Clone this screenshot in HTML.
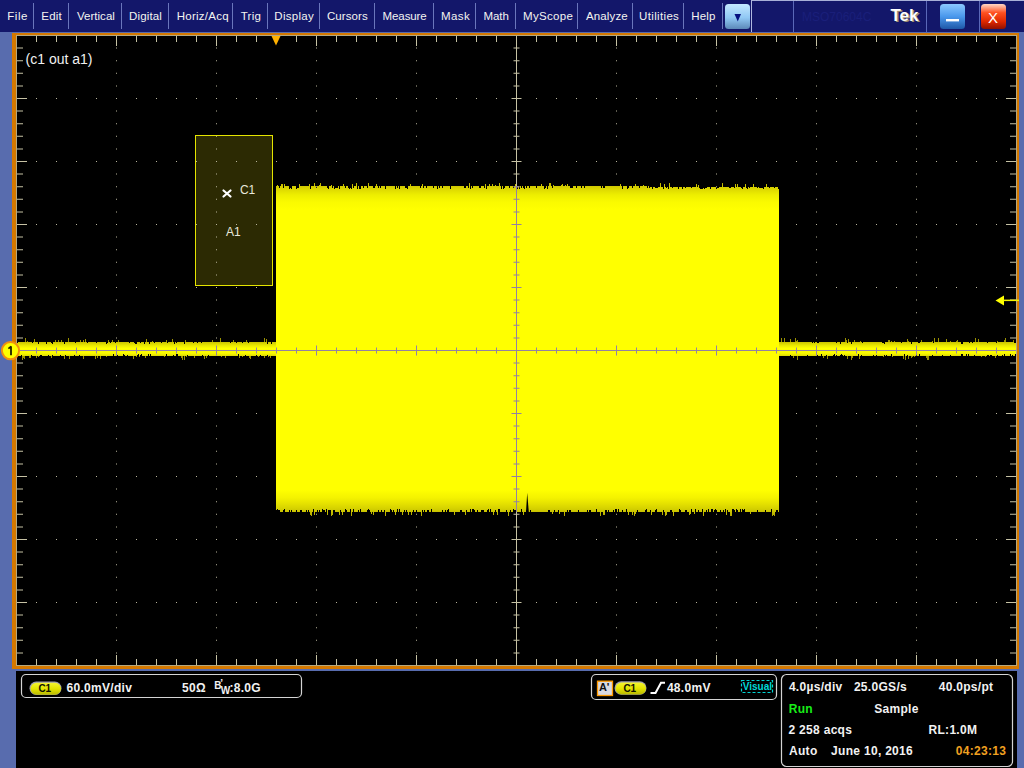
<!DOCTYPE html>
<html><head><meta charset="utf-8"><style>
html,body{margin:0;padding:0}
body{width:1024px;height:768px;overflow:hidden;position:relative;background:#586cae;font-family:"Liberation Sans",sans-serif}
.t{position:absolute;white-space:nowrap;font-family:"Liberation Sans",sans-serif}
svg{position:absolute;left:0;top:0}
</style></head><body>
<svg width="1024" height="768" viewBox="0 0 1024 768" shape-rendering="auto"><defs><linearGradient id="gdrop" x1="0" y1="0" x2="0" y2="1"><stop offset="0" stop-color="#c4e8ff"/><stop offset="0.55" stop-color="#90c8f4"/><stop offset="1" stop-color="#5c88b8"/></linearGradient><linearGradient id="gmin" x1="0" y1="0" x2="0" y2="1"><stop offset="0" stop-color="#8cc8ff"/><stop offset="0.5" stop-color="#4a98ec"/><stop offset="1" stop-color="#1e58a8"/></linearGradient><linearGradient id="gclose" x1="0" y1="0" x2="0" y2="1"><stop offset="0" stop-color="#ffd8c8"/><stop offset="0.35" stop-color="#ff5020"/><stop offset="0.7" stop-color="#e02800"/><stop offset="1" stop-color="#901000"/></linearGradient><linearGradient id="gbase" x1="0" y1="0" x2="0" y2="1"><stop offset="0" stop-color="#ccc400"/><stop offset="0.25" stop-color="#eaea00"/><stop offset="0.45" stop-color="#ffff00"/><stop offset="0.8" stop-color="#fafa00"/><stop offset="1" stop-color="#dcd800"/></linearGradient><linearGradient id="gblk" gradientUnits="userSpaceOnUse" x1="0" y1="183" x2="0" y2="516"><stop offset="0" stop-color="#b8b000"/><stop offset="0.009" stop-color="#d0c800"/><stop offset="0.021" stop-color="#e0dc00"/><stop offset="0.036" stop-color="#eeee00"/><stop offset="0.057" stop-color="#fafa00"/><stop offset="0.081" stop-color="#ffff00"/><stop offset="0.922" stop-color="#ffff00"/><stop offset="0.946" stop-color="#f4f200"/><stop offset="0.964" stop-color="#e4e000"/><stop offset="0.979" stop-color="#d4d000"/><stop offset="0.988" stop-color="#c8c000"/><stop offset="1" stop-color="#b0a800"/></linearGradient><linearGradient id="gpill" x1="0" y1="0" x2="0" y2="1"><stop offset="0" stop-color="#f4f430"/><stop offset="0.5" stop-color="#e4e400"/><stop offset="1" stop-color="#b8b800"/></linearGradient></defs><rect x="0" y="0" width="1024" height="32" fill="#13176a"/><rect x="33" y="3" width="1" height="26" fill="#6a76bc"/><rect x="68" y="3" width="1" height="26" fill="#6a76bc"/><rect x="121" y="3" width="1" height="26" fill="#6a76bc"/><rect x="168" y="3" width="1" height="26" fill="#6a76bc"/><rect x="232" y="3" width="1" height="26" fill="#6a76bc"/><rect x="267" y="3" width="1" height="26" fill="#6a76bc"/><rect x="319" y="3" width="1" height="26" fill="#6a76bc"/><rect x="374" y="3" width="1" height="26" fill="#6a76bc"/><rect x="433" y="3" width="1" height="26" fill="#6a76bc"/><rect x="475" y="3" width="1" height="26" fill="#6a76bc"/><rect x="515" y="3" width="1" height="26" fill="#6a76bc"/><rect x="577" y="3" width="1" height="26" fill="#6a76bc"/><rect x="632" y="3" width="1" height="26" fill="#6a76bc"/><rect x="683" y="3" width="1" height="26" fill="#6a76bc"/><rect x="722" y="3" width="1" height="26" fill="#6a76bc"/><rect x="725" y="4" width="25" height="25" rx="3.5" fill="url(#gdrop)"/><path d="M734.5 14 L741 14 L737.75 21.5 Z" fill="#061080"/><rect x="751" y="0" width="273" height="1" fill="#a8b0d8"/><rect x="751" y="0" width="1" height="32" fill="#b0b8e0"/><rect x="793" y="1" width="1" height="31" fill="#5a68b8"/><rect x="926" y="1" width="1" height="31" fill="#5a68b8"/><rect x="979" y="1" width="1" height="31" fill="#5a68b8"/><rect x="940" y="4" width="25" height="25" rx="3.5" fill="url(#gmin)"/><rect x="946" y="19" width="13" height="2.4" fill="#ffffff"/><rect x="981" y="4" width="25" height="25" rx="3.5" fill="url(#gclose)"/><rect x="12" y="33" width="1007" height="636" fill="#d47800"/><rect x="16" y="35" width="1001" height="631" fill="#000"/><rect x="16.5" y="35.5" width="1000" height="630" fill="none" stroke="#b4a880" stroke-width="1"/><rect x="195" y="135" width="78" height="151" fill="#2c2a03"/><path d="M116.0 47.6h1v1h-1zM116.0 60.2h1v1h-1zM116.0 72.8h1v1h-1zM116.0 85.4h1v1h-1zM116.0 98.0h1v1h-1zM116.0 110.6h1v1h-1zM116.0 123.2h1v1h-1zM116.0 135.8h1v1h-1zM116.0 148.4h1v1h-1zM116.0 161.0h1v1h-1zM116.0 173.6h1v1h-1zM116.0 186.2h1v1h-1zM116.0 198.8h1v1h-1zM116.0 211.4h1v1h-1zM116.0 224.0h1v1h-1zM116.0 236.6h1v1h-1zM116.0 249.2h1v1h-1zM116.0 261.8h1v1h-1zM116.0 274.4h1v1h-1zM116.0 287.0h1v1h-1zM116.0 299.6h1v1h-1zM116.0 312.2h1v1h-1zM116.0 324.8h1v1h-1zM116.0 337.4h1v1h-1zM116.0 350.0h1v1h-1zM116.0 362.6h1v1h-1zM116.0 375.2h1v1h-1zM116.0 387.8h1v1h-1zM116.0 400.4h1v1h-1zM116.0 413.0h1v1h-1zM116.0 425.6h1v1h-1zM116.0 438.2h1v1h-1zM116.0 450.8h1v1h-1zM116.0 463.4h1v1h-1zM116.0 476.0h1v1h-1zM116.0 488.6h1v1h-1zM116.0 501.2h1v1h-1zM116.0 513.8h1v1h-1zM116.0 526.4h1v1h-1zM116.0 539.0h1v1h-1zM116.0 551.6h1v1h-1zM116.0 564.2h1v1h-1zM116.0 576.8h1v1h-1zM116.0 589.4h1v1h-1zM116.0 602.0h1v1h-1zM116.0 614.6h1v1h-1zM116.0 627.2h1v1h-1zM116.0 639.8h1v1h-1zM116.0 652.4h1v1h-1zM216.0 47.6h1v1h-1zM216.0 60.2h1v1h-1zM216.0 72.8h1v1h-1zM216.0 85.4h1v1h-1zM216.0 98.0h1v1h-1zM216.0 110.6h1v1h-1zM216.0 123.2h1v1h-1zM216.0 135.8h1v1h-1zM216.0 148.4h1v1h-1zM216.0 161.0h1v1h-1zM216.0 173.6h1v1h-1zM216.0 186.2h1v1h-1zM216.0 198.8h1v1h-1zM216.0 211.4h1v1h-1zM216.0 224.0h1v1h-1zM216.0 236.6h1v1h-1zM216.0 249.2h1v1h-1zM216.0 261.8h1v1h-1zM216.0 274.4h1v1h-1zM216.0 287.0h1v1h-1zM216.0 299.6h1v1h-1zM216.0 312.2h1v1h-1zM216.0 324.8h1v1h-1zM216.0 337.4h1v1h-1zM216.0 350.0h1v1h-1zM216.0 362.6h1v1h-1zM216.0 375.2h1v1h-1zM216.0 387.8h1v1h-1zM216.0 400.4h1v1h-1zM216.0 413.0h1v1h-1zM216.0 425.6h1v1h-1zM216.0 438.2h1v1h-1zM216.0 450.8h1v1h-1zM216.0 463.4h1v1h-1zM216.0 476.0h1v1h-1zM216.0 488.6h1v1h-1zM216.0 501.2h1v1h-1zM216.0 513.8h1v1h-1zM216.0 526.4h1v1h-1zM216.0 539.0h1v1h-1zM216.0 551.6h1v1h-1zM216.0 564.2h1v1h-1zM216.0 576.8h1v1h-1zM216.0 589.4h1v1h-1zM216.0 602.0h1v1h-1zM216.0 614.6h1v1h-1zM216.0 627.2h1v1h-1zM216.0 639.8h1v1h-1zM216.0 652.4h1v1h-1zM316.0 47.6h1v1h-1zM316.0 60.2h1v1h-1zM316.0 72.8h1v1h-1zM316.0 85.4h1v1h-1zM316.0 98.0h1v1h-1zM316.0 110.6h1v1h-1zM316.0 123.2h1v1h-1zM316.0 135.8h1v1h-1zM316.0 148.4h1v1h-1zM316.0 161.0h1v1h-1zM316.0 173.6h1v1h-1zM316.0 186.2h1v1h-1zM316.0 198.8h1v1h-1zM316.0 211.4h1v1h-1zM316.0 224.0h1v1h-1zM316.0 236.6h1v1h-1zM316.0 249.2h1v1h-1zM316.0 261.8h1v1h-1zM316.0 274.4h1v1h-1zM316.0 287.0h1v1h-1zM316.0 299.6h1v1h-1zM316.0 312.2h1v1h-1zM316.0 324.8h1v1h-1zM316.0 337.4h1v1h-1zM316.0 350.0h1v1h-1zM316.0 362.6h1v1h-1zM316.0 375.2h1v1h-1zM316.0 387.8h1v1h-1zM316.0 400.4h1v1h-1zM316.0 413.0h1v1h-1zM316.0 425.6h1v1h-1zM316.0 438.2h1v1h-1zM316.0 450.8h1v1h-1zM316.0 463.4h1v1h-1zM316.0 476.0h1v1h-1zM316.0 488.6h1v1h-1zM316.0 501.2h1v1h-1zM316.0 513.8h1v1h-1zM316.0 526.4h1v1h-1zM316.0 539.0h1v1h-1zM316.0 551.6h1v1h-1zM316.0 564.2h1v1h-1zM316.0 576.8h1v1h-1zM316.0 589.4h1v1h-1zM316.0 602.0h1v1h-1zM316.0 614.6h1v1h-1zM316.0 627.2h1v1h-1zM316.0 639.8h1v1h-1zM316.0 652.4h1v1h-1zM416.0 47.6h1v1h-1zM416.0 60.2h1v1h-1zM416.0 72.8h1v1h-1zM416.0 85.4h1v1h-1zM416.0 98.0h1v1h-1zM416.0 110.6h1v1h-1zM416.0 123.2h1v1h-1zM416.0 135.8h1v1h-1zM416.0 148.4h1v1h-1zM416.0 161.0h1v1h-1zM416.0 173.6h1v1h-1zM416.0 186.2h1v1h-1zM416.0 198.8h1v1h-1zM416.0 211.4h1v1h-1zM416.0 224.0h1v1h-1zM416.0 236.6h1v1h-1zM416.0 249.2h1v1h-1zM416.0 261.8h1v1h-1zM416.0 274.4h1v1h-1zM416.0 287.0h1v1h-1zM416.0 299.6h1v1h-1zM416.0 312.2h1v1h-1zM416.0 324.8h1v1h-1zM416.0 337.4h1v1h-1zM416.0 350.0h1v1h-1zM416.0 362.6h1v1h-1zM416.0 375.2h1v1h-1zM416.0 387.8h1v1h-1zM416.0 400.4h1v1h-1zM416.0 413.0h1v1h-1zM416.0 425.6h1v1h-1zM416.0 438.2h1v1h-1zM416.0 450.8h1v1h-1zM416.0 463.4h1v1h-1zM416.0 476.0h1v1h-1zM416.0 488.6h1v1h-1zM416.0 501.2h1v1h-1zM416.0 513.8h1v1h-1zM416.0 526.4h1v1h-1zM416.0 539.0h1v1h-1zM416.0 551.6h1v1h-1zM416.0 564.2h1v1h-1zM416.0 576.8h1v1h-1zM416.0 589.4h1v1h-1zM416.0 602.0h1v1h-1zM416.0 614.6h1v1h-1zM416.0 627.2h1v1h-1zM416.0 639.8h1v1h-1zM416.0 652.4h1v1h-1zM616.0 47.6h1v1h-1zM616.0 60.2h1v1h-1zM616.0 72.8h1v1h-1zM616.0 85.4h1v1h-1zM616.0 98.0h1v1h-1zM616.0 110.6h1v1h-1zM616.0 123.2h1v1h-1zM616.0 135.8h1v1h-1zM616.0 148.4h1v1h-1zM616.0 161.0h1v1h-1zM616.0 173.6h1v1h-1zM616.0 186.2h1v1h-1zM616.0 198.8h1v1h-1zM616.0 211.4h1v1h-1zM616.0 224.0h1v1h-1zM616.0 236.6h1v1h-1zM616.0 249.2h1v1h-1zM616.0 261.8h1v1h-1zM616.0 274.4h1v1h-1zM616.0 287.0h1v1h-1zM616.0 299.6h1v1h-1zM616.0 312.2h1v1h-1zM616.0 324.8h1v1h-1zM616.0 337.4h1v1h-1zM616.0 350.0h1v1h-1zM616.0 362.6h1v1h-1zM616.0 375.2h1v1h-1zM616.0 387.8h1v1h-1zM616.0 400.4h1v1h-1zM616.0 413.0h1v1h-1zM616.0 425.6h1v1h-1zM616.0 438.2h1v1h-1zM616.0 450.8h1v1h-1zM616.0 463.4h1v1h-1zM616.0 476.0h1v1h-1zM616.0 488.6h1v1h-1zM616.0 501.2h1v1h-1zM616.0 513.8h1v1h-1zM616.0 526.4h1v1h-1zM616.0 539.0h1v1h-1zM616.0 551.6h1v1h-1zM616.0 564.2h1v1h-1zM616.0 576.8h1v1h-1zM616.0 589.4h1v1h-1zM616.0 602.0h1v1h-1zM616.0 614.6h1v1h-1zM616.0 627.2h1v1h-1zM616.0 639.8h1v1h-1zM616.0 652.4h1v1h-1zM716.0 47.6h1v1h-1zM716.0 60.2h1v1h-1zM716.0 72.8h1v1h-1zM716.0 85.4h1v1h-1zM716.0 98.0h1v1h-1zM716.0 110.6h1v1h-1zM716.0 123.2h1v1h-1zM716.0 135.8h1v1h-1zM716.0 148.4h1v1h-1zM716.0 161.0h1v1h-1zM716.0 173.6h1v1h-1zM716.0 186.2h1v1h-1zM716.0 198.8h1v1h-1zM716.0 211.4h1v1h-1zM716.0 224.0h1v1h-1zM716.0 236.6h1v1h-1zM716.0 249.2h1v1h-1zM716.0 261.8h1v1h-1zM716.0 274.4h1v1h-1zM716.0 287.0h1v1h-1zM716.0 299.6h1v1h-1zM716.0 312.2h1v1h-1zM716.0 324.8h1v1h-1zM716.0 337.4h1v1h-1zM716.0 350.0h1v1h-1zM716.0 362.6h1v1h-1zM716.0 375.2h1v1h-1zM716.0 387.8h1v1h-1zM716.0 400.4h1v1h-1zM716.0 413.0h1v1h-1zM716.0 425.6h1v1h-1zM716.0 438.2h1v1h-1zM716.0 450.8h1v1h-1zM716.0 463.4h1v1h-1zM716.0 476.0h1v1h-1zM716.0 488.6h1v1h-1zM716.0 501.2h1v1h-1zM716.0 513.8h1v1h-1zM716.0 526.4h1v1h-1zM716.0 539.0h1v1h-1zM716.0 551.6h1v1h-1zM716.0 564.2h1v1h-1zM716.0 576.8h1v1h-1zM716.0 589.4h1v1h-1zM716.0 602.0h1v1h-1zM716.0 614.6h1v1h-1zM716.0 627.2h1v1h-1zM716.0 639.8h1v1h-1zM716.0 652.4h1v1h-1zM816.0 47.6h1v1h-1zM816.0 60.2h1v1h-1zM816.0 72.8h1v1h-1zM816.0 85.4h1v1h-1zM816.0 98.0h1v1h-1zM816.0 110.6h1v1h-1zM816.0 123.2h1v1h-1zM816.0 135.8h1v1h-1zM816.0 148.4h1v1h-1zM816.0 161.0h1v1h-1zM816.0 173.6h1v1h-1zM816.0 186.2h1v1h-1zM816.0 198.8h1v1h-1zM816.0 211.4h1v1h-1zM816.0 224.0h1v1h-1zM816.0 236.6h1v1h-1zM816.0 249.2h1v1h-1zM816.0 261.8h1v1h-1zM816.0 274.4h1v1h-1zM816.0 287.0h1v1h-1zM816.0 299.6h1v1h-1zM816.0 312.2h1v1h-1zM816.0 324.8h1v1h-1zM816.0 337.4h1v1h-1zM816.0 350.0h1v1h-1zM816.0 362.6h1v1h-1zM816.0 375.2h1v1h-1zM816.0 387.8h1v1h-1zM816.0 400.4h1v1h-1zM816.0 413.0h1v1h-1zM816.0 425.6h1v1h-1zM816.0 438.2h1v1h-1zM816.0 450.8h1v1h-1zM816.0 463.4h1v1h-1zM816.0 476.0h1v1h-1zM816.0 488.6h1v1h-1zM816.0 501.2h1v1h-1zM816.0 513.8h1v1h-1zM816.0 526.4h1v1h-1zM816.0 539.0h1v1h-1zM816.0 551.6h1v1h-1zM816.0 564.2h1v1h-1zM816.0 576.8h1v1h-1zM816.0 589.4h1v1h-1zM816.0 602.0h1v1h-1zM816.0 614.6h1v1h-1zM816.0 627.2h1v1h-1zM816.0 639.8h1v1h-1zM816.0 652.4h1v1h-1zM916.0 47.6h1v1h-1zM916.0 60.2h1v1h-1zM916.0 72.8h1v1h-1zM916.0 85.4h1v1h-1zM916.0 98.0h1v1h-1zM916.0 110.6h1v1h-1zM916.0 123.2h1v1h-1zM916.0 135.8h1v1h-1zM916.0 148.4h1v1h-1zM916.0 161.0h1v1h-1zM916.0 173.6h1v1h-1zM916.0 186.2h1v1h-1zM916.0 198.8h1v1h-1zM916.0 211.4h1v1h-1zM916.0 224.0h1v1h-1zM916.0 236.6h1v1h-1zM916.0 249.2h1v1h-1zM916.0 261.8h1v1h-1zM916.0 274.4h1v1h-1zM916.0 287.0h1v1h-1zM916.0 299.6h1v1h-1zM916.0 312.2h1v1h-1zM916.0 324.8h1v1h-1zM916.0 337.4h1v1h-1zM916.0 350.0h1v1h-1zM916.0 362.6h1v1h-1zM916.0 375.2h1v1h-1zM916.0 387.8h1v1h-1zM916.0 400.4h1v1h-1zM916.0 413.0h1v1h-1zM916.0 425.6h1v1h-1zM916.0 438.2h1v1h-1zM916.0 450.8h1v1h-1zM916.0 463.4h1v1h-1zM916.0 476.0h1v1h-1zM916.0 488.6h1v1h-1zM916.0 501.2h1v1h-1zM916.0 513.8h1v1h-1zM916.0 526.4h1v1h-1zM916.0 539.0h1v1h-1zM916.0 551.6h1v1h-1zM916.0 564.2h1v1h-1zM916.0 576.8h1v1h-1zM916.0 589.4h1v1h-1zM916.0 602.0h1v1h-1zM916.0 614.6h1v1h-1zM916.0 627.2h1v1h-1zM916.0 639.8h1v1h-1zM916.0 652.4h1v1h-1zM36.0 98.0h1v1h-1zM56.0 98.0h1v1h-1zM76.0 98.0h1v1h-1zM96.0 98.0h1v1h-1zM116.0 98.0h1v1h-1zM136.0 98.0h1v1h-1zM156.0 98.0h1v1h-1zM176.0 98.0h1v1h-1zM196.0 98.0h1v1h-1zM216.0 98.0h1v1h-1zM236.0 98.0h1v1h-1zM256.0 98.0h1v1h-1zM276.0 98.0h1v1h-1zM296.0 98.0h1v1h-1zM316.0 98.0h1v1h-1zM336.0 98.0h1v1h-1zM356.0 98.0h1v1h-1zM376.0 98.0h1v1h-1zM396.0 98.0h1v1h-1zM416.0 98.0h1v1h-1zM436.0 98.0h1v1h-1zM456.0 98.0h1v1h-1zM476.0 98.0h1v1h-1zM496.0 98.0h1v1h-1zM516.0 98.0h1v1h-1zM536.0 98.0h1v1h-1zM556.0 98.0h1v1h-1zM576.0 98.0h1v1h-1zM596.0 98.0h1v1h-1zM616.0 98.0h1v1h-1zM636.0 98.0h1v1h-1zM656.0 98.0h1v1h-1zM676.0 98.0h1v1h-1zM696.0 98.0h1v1h-1zM716.0 98.0h1v1h-1zM736.0 98.0h1v1h-1zM756.0 98.0h1v1h-1zM776.0 98.0h1v1h-1zM796.0 98.0h1v1h-1zM816.0 98.0h1v1h-1zM836.0 98.0h1v1h-1zM856.0 98.0h1v1h-1zM876.0 98.0h1v1h-1zM896.0 98.0h1v1h-1zM916.0 98.0h1v1h-1zM936.0 98.0h1v1h-1zM956.0 98.0h1v1h-1zM976.0 98.0h1v1h-1zM996.0 98.0h1v1h-1zM36.0 161.0h1v1h-1zM56.0 161.0h1v1h-1zM76.0 161.0h1v1h-1zM96.0 161.0h1v1h-1zM116.0 161.0h1v1h-1zM136.0 161.0h1v1h-1zM156.0 161.0h1v1h-1zM176.0 161.0h1v1h-1zM196.0 161.0h1v1h-1zM216.0 161.0h1v1h-1zM236.0 161.0h1v1h-1zM256.0 161.0h1v1h-1zM276.0 161.0h1v1h-1zM296.0 161.0h1v1h-1zM316.0 161.0h1v1h-1zM336.0 161.0h1v1h-1zM356.0 161.0h1v1h-1zM376.0 161.0h1v1h-1zM396.0 161.0h1v1h-1zM416.0 161.0h1v1h-1zM436.0 161.0h1v1h-1zM456.0 161.0h1v1h-1zM476.0 161.0h1v1h-1zM496.0 161.0h1v1h-1zM516.0 161.0h1v1h-1zM536.0 161.0h1v1h-1zM556.0 161.0h1v1h-1zM576.0 161.0h1v1h-1zM596.0 161.0h1v1h-1zM616.0 161.0h1v1h-1zM636.0 161.0h1v1h-1zM656.0 161.0h1v1h-1zM676.0 161.0h1v1h-1zM696.0 161.0h1v1h-1zM716.0 161.0h1v1h-1zM736.0 161.0h1v1h-1zM756.0 161.0h1v1h-1zM776.0 161.0h1v1h-1zM796.0 161.0h1v1h-1zM816.0 161.0h1v1h-1zM836.0 161.0h1v1h-1zM856.0 161.0h1v1h-1zM876.0 161.0h1v1h-1zM896.0 161.0h1v1h-1zM916.0 161.0h1v1h-1zM936.0 161.0h1v1h-1zM956.0 161.0h1v1h-1zM976.0 161.0h1v1h-1zM996.0 161.0h1v1h-1zM36.0 224.0h1v1h-1zM56.0 224.0h1v1h-1zM76.0 224.0h1v1h-1zM96.0 224.0h1v1h-1zM116.0 224.0h1v1h-1zM136.0 224.0h1v1h-1zM156.0 224.0h1v1h-1zM176.0 224.0h1v1h-1zM196.0 224.0h1v1h-1zM216.0 224.0h1v1h-1zM236.0 224.0h1v1h-1zM256.0 224.0h1v1h-1zM276.0 224.0h1v1h-1zM296.0 224.0h1v1h-1zM316.0 224.0h1v1h-1zM336.0 224.0h1v1h-1zM356.0 224.0h1v1h-1zM376.0 224.0h1v1h-1zM396.0 224.0h1v1h-1zM416.0 224.0h1v1h-1zM436.0 224.0h1v1h-1zM456.0 224.0h1v1h-1zM476.0 224.0h1v1h-1zM496.0 224.0h1v1h-1zM516.0 224.0h1v1h-1zM536.0 224.0h1v1h-1zM556.0 224.0h1v1h-1zM576.0 224.0h1v1h-1zM596.0 224.0h1v1h-1zM616.0 224.0h1v1h-1zM636.0 224.0h1v1h-1zM656.0 224.0h1v1h-1zM676.0 224.0h1v1h-1zM696.0 224.0h1v1h-1zM716.0 224.0h1v1h-1zM736.0 224.0h1v1h-1zM756.0 224.0h1v1h-1zM776.0 224.0h1v1h-1zM796.0 224.0h1v1h-1zM816.0 224.0h1v1h-1zM836.0 224.0h1v1h-1zM856.0 224.0h1v1h-1zM876.0 224.0h1v1h-1zM896.0 224.0h1v1h-1zM916.0 224.0h1v1h-1zM936.0 224.0h1v1h-1zM956.0 224.0h1v1h-1zM976.0 224.0h1v1h-1zM996.0 224.0h1v1h-1zM36.0 287.0h1v1h-1zM56.0 287.0h1v1h-1zM76.0 287.0h1v1h-1zM96.0 287.0h1v1h-1zM116.0 287.0h1v1h-1zM136.0 287.0h1v1h-1zM156.0 287.0h1v1h-1zM176.0 287.0h1v1h-1zM196.0 287.0h1v1h-1zM216.0 287.0h1v1h-1zM236.0 287.0h1v1h-1zM256.0 287.0h1v1h-1zM276.0 287.0h1v1h-1zM296.0 287.0h1v1h-1zM316.0 287.0h1v1h-1zM336.0 287.0h1v1h-1zM356.0 287.0h1v1h-1zM376.0 287.0h1v1h-1zM396.0 287.0h1v1h-1zM416.0 287.0h1v1h-1zM436.0 287.0h1v1h-1zM456.0 287.0h1v1h-1zM476.0 287.0h1v1h-1zM496.0 287.0h1v1h-1zM516.0 287.0h1v1h-1zM536.0 287.0h1v1h-1zM556.0 287.0h1v1h-1zM576.0 287.0h1v1h-1zM596.0 287.0h1v1h-1zM616.0 287.0h1v1h-1zM636.0 287.0h1v1h-1zM656.0 287.0h1v1h-1zM676.0 287.0h1v1h-1zM696.0 287.0h1v1h-1zM716.0 287.0h1v1h-1zM736.0 287.0h1v1h-1zM756.0 287.0h1v1h-1zM776.0 287.0h1v1h-1zM796.0 287.0h1v1h-1zM816.0 287.0h1v1h-1zM836.0 287.0h1v1h-1zM856.0 287.0h1v1h-1zM876.0 287.0h1v1h-1zM896.0 287.0h1v1h-1zM916.0 287.0h1v1h-1zM936.0 287.0h1v1h-1zM956.0 287.0h1v1h-1zM976.0 287.0h1v1h-1zM996.0 287.0h1v1h-1zM36.0 413.0h1v1h-1zM56.0 413.0h1v1h-1zM76.0 413.0h1v1h-1zM96.0 413.0h1v1h-1zM116.0 413.0h1v1h-1zM136.0 413.0h1v1h-1zM156.0 413.0h1v1h-1zM176.0 413.0h1v1h-1zM196.0 413.0h1v1h-1zM216.0 413.0h1v1h-1zM236.0 413.0h1v1h-1zM256.0 413.0h1v1h-1zM276.0 413.0h1v1h-1zM296.0 413.0h1v1h-1zM316.0 413.0h1v1h-1zM336.0 413.0h1v1h-1zM356.0 413.0h1v1h-1zM376.0 413.0h1v1h-1zM396.0 413.0h1v1h-1zM416.0 413.0h1v1h-1zM436.0 413.0h1v1h-1zM456.0 413.0h1v1h-1zM476.0 413.0h1v1h-1zM496.0 413.0h1v1h-1zM516.0 413.0h1v1h-1zM536.0 413.0h1v1h-1zM556.0 413.0h1v1h-1zM576.0 413.0h1v1h-1zM596.0 413.0h1v1h-1zM616.0 413.0h1v1h-1zM636.0 413.0h1v1h-1zM656.0 413.0h1v1h-1zM676.0 413.0h1v1h-1zM696.0 413.0h1v1h-1zM716.0 413.0h1v1h-1zM736.0 413.0h1v1h-1zM756.0 413.0h1v1h-1zM776.0 413.0h1v1h-1zM796.0 413.0h1v1h-1zM816.0 413.0h1v1h-1zM836.0 413.0h1v1h-1zM856.0 413.0h1v1h-1zM876.0 413.0h1v1h-1zM896.0 413.0h1v1h-1zM916.0 413.0h1v1h-1zM936.0 413.0h1v1h-1zM956.0 413.0h1v1h-1zM976.0 413.0h1v1h-1zM996.0 413.0h1v1h-1zM36.0 476.0h1v1h-1zM56.0 476.0h1v1h-1zM76.0 476.0h1v1h-1zM96.0 476.0h1v1h-1zM116.0 476.0h1v1h-1zM136.0 476.0h1v1h-1zM156.0 476.0h1v1h-1zM176.0 476.0h1v1h-1zM196.0 476.0h1v1h-1zM216.0 476.0h1v1h-1zM236.0 476.0h1v1h-1zM256.0 476.0h1v1h-1zM276.0 476.0h1v1h-1zM296.0 476.0h1v1h-1zM316.0 476.0h1v1h-1zM336.0 476.0h1v1h-1zM356.0 476.0h1v1h-1zM376.0 476.0h1v1h-1zM396.0 476.0h1v1h-1zM416.0 476.0h1v1h-1zM436.0 476.0h1v1h-1zM456.0 476.0h1v1h-1zM476.0 476.0h1v1h-1zM496.0 476.0h1v1h-1zM516.0 476.0h1v1h-1zM536.0 476.0h1v1h-1zM556.0 476.0h1v1h-1zM576.0 476.0h1v1h-1zM596.0 476.0h1v1h-1zM616.0 476.0h1v1h-1zM636.0 476.0h1v1h-1zM656.0 476.0h1v1h-1zM676.0 476.0h1v1h-1zM696.0 476.0h1v1h-1zM716.0 476.0h1v1h-1zM736.0 476.0h1v1h-1zM756.0 476.0h1v1h-1zM776.0 476.0h1v1h-1zM796.0 476.0h1v1h-1zM816.0 476.0h1v1h-1zM836.0 476.0h1v1h-1zM856.0 476.0h1v1h-1zM876.0 476.0h1v1h-1zM896.0 476.0h1v1h-1zM916.0 476.0h1v1h-1zM936.0 476.0h1v1h-1zM956.0 476.0h1v1h-1zM976.0 476.0h1v1h-1zM996.0 476.0h1v1h-1zM36.0 539.0h1v1h-1zM56.0 539.0h1v1h-1zM76.0 539.0h1v1h-1zM96.0 539.0h1v1h-1zM116.0 539.0h1v1h-1zM136.0 539.0h1v1h-1zM156.0 539.0h1v1h-1zM176.0 539.0h1v1h-1zM196.0 539.0h1v1h-1zM216.0 539.0h1v1h-1zM236.0 539.0h1v1h-1zM256.0 539.0h1v1h-1zM276.0 539.0h1v1h-1zM296.0 539.0h1v1h-1zM316.0 539.0h1v1h-1zM336.0 539.0h1v1h-1zM356.0 539.0h1v1h-1zM376.0 539.0h1v1h-1zM396.0 539.0h1v1h-1zM416.0 539.0h1v1h-1zM436.0 539.0h1v1h-1zM456.0 539.0h1v1h-1zM476.0 539.0h1v1h-1zM496.0 539.0h1v1h-1zM516.0 539.0h1v1h-1zM536.0 539.0h1v1h-1zM556.0 539.0h1v1h-1zM576.0 539.0h1v1h-1zM596.0 539.0h1v1h-1zM616.0 539.0h1v1h-1zM636.0 539.0h1v1h-1zM656.0 539.0h1v1h-1zM676.0 539.0h1v1h-1zM696.0 539.0h1v1h-1zM716.0 539.0h1v1h-1zM736.0 539.0h1v1h-1zM756.0 539.0h1v1h-1zM776.0 539.0h1v1h-1zM796.0 539.0h1v1h-1zM816.0 539.0h1v1h-1zM836.0 539.0h1v1h-1zM856.0 539.0h1v1h-1zM876.0 539.0h1v1h-1zM896.0 539.0h1v1h-1zM916.0 539.0h1v1h-1zM936.0 539.0h1v1h-1zM956.0 539.0h1v1h-1zM976.0 539.0h1v1h-1zM996.0 539.0h1v1h-1zM36.0 602.0h1v1h-1zM56.0 602.0h1v1h-1zM76.0 602.0h1v1h-1zM96.0 602.0h1v1h-1zM116.0 602.0h1v1h-1zM136.0 602.0h1v1h-1zM156.0 602.0h1v1h-1zM176.0 602.0h1v1h-1zM196.0 602.0h1v1h-1zM216.0 602.0h1v1h-1zM236.0 602.0h1v1h-1zM256.0 602.0h1v1h-1zM276.0 602.0h1v1h-1zM296.0 602.0h1v1h-1zM316.0 602.0h1v1h-1zM336.0 602.0h1v1h-1zM356.0 602.0h1v1h-1zM376.0 602.0h1v1h-1zM396.0 602.0h1v1h-1zM416.0 602.0h1v1h-1zM436.0 602.0h1v1h-1zM456.0 602.0h1v1h-1zM476.0 602.0h1v1h-1zM496.0 602.0h1v1h-1zM516.0 602.0h1v1h-1zM536.0 602.0h1v1h-1zM556.0 602.0h1v1h-1zM576.0 602.0h1v1h-1zM596.0 602.0h1v1h-1zM616.0 602.0h1v1h-1zM636.0 602.0h1v1h-1zM656.0 602.0h1v1h-1zM676.0 602.0h1v1h-1zM696.0 602.0h1v1h-1zM716.0 602.0h1v1h-1zM736.0 602.0h1v1h-1zM756.0 602.0h1v1h-1zM776.0 602.0h1v1h-1zM796.0 602.0h1v1h-1zM816.0 602.0h1v1h-1zM836.0 602.0h1v1h-1zM856.0 602.0h1v1h-1zM876.0 602.0h1v1h-1zM896.0 602.0h1v1h-1zM916.0 602.0h1v1h-1zM936.0 602.0h1v1h-1zM956.0 602.0h1v1h-1zM976.0 602.0h1v1h-1zM996.0 602.0h1v1h-1z" fill="#b8b49c"/><path d="M36.0 36h1v6h-1zM36.0 659h1v6h-1zM56.0 36h1v6h-1zM56.0 659h1v6h-1zM76.0 36h1v6h-1zM76.0 659h1v6h-1zM96.0 36h1v6h-1zM96.0 659h1v6h-1zM116.0 36h1v10h-1zM116.0 655h1v10h-1zM136.0 36h1v6h-1zM136.0 659h1v6h-1zM156.0 36h1v6h-1zM156.0 659h1v6h-1zM176.0 36h1v6h-1zM176.0 659h1v6h-1zM196.0 36h1v6h-1zM196.0 659h1v6h-1zM216.0 36h1v10h-1zM216.0 655h1v10h-1zM236.0 36h1v6h-1zM236.0 659h1v6h-1zM256.0 36h1v6h-1zM256.0 659h1v6h-1zM276.0 36h1v6h-1zM276.0 659h1v6h-1zM296.0 36h1v6h-1zM296.0 659h1v6h-1zM316.0 36h1v10h-1zM316.0 655h1v10h-1zM336.0 36h1v6h-1zM336.0 659h1v6h-1zM356.0 36h1v6h-1zM356.0 659h1v6h-1zM376.0 36h1v6h-1zM376.0 659h1v6h-1zM396.0 36h1v6h-1zM396.0 659h1v6h-1zM416.0 36h1v10h-1zM416.0 655h1v10h-1zM436.0 36h1v6h-1zM436.0 659h1v6h-1zM456.0 36h1v6h-1zM456.0 659h1v6h-1zM476.0 36h1v6h-1zM476.0 659h1v6h-1zM496.0 36h1v6h-1zM496.0 659h1v6h-1zM516.0 36h1v10h-1zM516.0 655h1v10h-1zM536.0 36h1v6h-1zM536.0 659h1v6h-1zM556.0 36h1v6h-1zM556.0 659h1v6h-1zM576.0 36h1v6h-1zM576.0 659h1v6h-1zM596.0 36h1v6h-1zM596.0 659h1v6h-1zM616.0 36h1v10h-1zM616.0 655h1v10h-1zM636.0 36h1v6h-1zM636.0 659h1v6h-1zM656.0 36h1v6h-1zM656.0 659h1v6h-1zM676.0 36h1v6h-1zM676.0 659h1v6h-1zM696.0 36h1v6h-1zM696.0 659h1v6h-1zM716.0 36h1v10h-1zM716.0 655h1v10h-1zM736.0 36h1v6h-1zM736.0 659h1v6h-1zM756.0 36h1v6h-1zM756.0 659h1v6h-1zM776.0 36h1v6h-1zM776.0 659h1v6h-1zM796.0 36h1v6h-1zM796.0 659h1v6h-1zM816.0 36h1v10h-1zM816.0 655h1v10h-1zM836.0 36h1v6h-1zM836.0 659h1v6h-1zM856.0 36h1v6h-1zM856.0 659h1v6h-1zM876.0 36h1v6h-1zM876.0 659h1v6h-1zM896.0 36h1v6h-1zM896.0 659h1v6h-1zM916.0 36h1v10h-1zM916.0 655h1v10h-1zM936.0 36h1v6h-1zM936.0 659h1v6h-1zM956.0 36h1v6h-1zM956.0 659h1v6h-1zM976.0 36h1v6h-1zM976.0 659h1v6h-1zM996.0 36h1v6h-1zM996.0 659h1v6h-1zM17 47.6h6v1h-6zM1010 47.6h6v1h-6zM17 60.2h6v1h-6zM1010 60.2h6v1h-6zM17 72.8h6v1h-6zM1010 72.8h6v1h-6zM17 85.4h6v1h-6zM1010 85.4h6v1h-6zM17 98.0h10v1h-10zM1006 98.0h10v1h-10zM17 110.6h6v1h-6zM1010 110.6h6v1h-6zM17 123.2h6v1h-6zM1010 123.2h6v1h-6zM17 135.8h6v1h-6zM1010 135.8h6v1h-6zM17 148.4h6v1h-6zM1010 148.4h6v1h-6zM17 161.0h10v1h-10zM1006 161.0h10v1h-10zM17 173.6h6v1h-6zM1010 173.6h6v1h-6zM17 186.2h6v1h-6zM1010 186.2h6v1h-6zM17 198.8h6v1h-6zM1010 198.8h6v1h-6zM17 211.4h6v1h-6zM1010 211.4h6v1h-6zM17 224.0h10v1h-10zM1006 224.0h10v1h-10zM17 236.6h6v1h-6zM1010 236.6h6v1h-6zM17 249.2h6v1h-6zM1010 249.2h6v1h-6zM17 261.8h6v1h-6zM1010 261.8h6v1h-6zM17 274.4h6v1h-6zM1010 274.4h6v1h-6zM17 287.0h10v1h-10zM1006 287.0h10v1h-10zM17 299.6h6v1h-6zM1010 299.6h6v1h-6zM17 312.2h6v1h-6zM1010 312.2h6v1h-6zM17 324.8h6v1h-6zM1010 324.8h6v1h-6zM17 337.4h6v1h-6zM1010 337.4h6v1h-6zM17 350.0h10v1h-10zM1006 350.0h10v1h-10zM17 362.6h6v1h-6zM1010 362.6h6v1h-6zM17 375.2h6v1h-6zM1010 375.2h6v1h-6zM17 387.8h6v1h-6zM1010 387.8h6v1h-6zM17 400.4h6v1h-6zM1010 400.4h6v1h-6zM17 413.0h10v1h-10zM1006 413.0h10v1h-10zM17 425.6h6v1h-6zM1010 425.6h6v1h-6zM17 438.2h6v1h-6zM1010 438.2h6v1h-6zM17 450.8h6v1h-6zM1010 450.8h6v1h-6zM17 463.4h6v1h-6zM1010 463.4h6v1h-6zM17 476.0h10v1h-10zM1006 476.0h10v1h-10zM17 488.6h6v1h-6zM1010 488.6h6v1h-6zM17 501.2h6v1h-6zM1010 501.2h6v1h-6zM17 513.8h6v1h-6zM1010 513.8h6v1h-6zM17 526.4h6v1h-6zM1010 526.4h6v1h-6zM17 539.0h10v1h-10zM1006 539.0h10v1h-10zM17 551.6h6v1h-6zM1010 551.6h6v1h-6zM17 564.2h6v1h-6zM1010 564.2h6v1h-6zM17 576.8h6v1h-6zM1010 576.8h6v1h-6zM17 589.4h6v1h-6zM1010 589.4h6v1h-6zM17 602.0h10v1h-10zM1006 602.0h10v1h-10zM17 614.6h6v1h-6zM1010 614.6h6v1h-6zM17 627.2h6v1h-6zM1010 627.2h6v1h-6zM17 639.8h6v1h-6zM1010 639.8h6v1h-6zM17 652.4h6v1h-6zM1010 652.4h6v1h-6z" fill="#c6c2a4"/><path d="M516.0 36h1v629h-1zM17 350.0h999v1h-999zM513.5 47.6h6v1h-6zM36.0 347.5h1v6h-1zM513.5 60.2h6v1h-6zM56.0 347.5h1v6h-1zM513.5 72.8h6v1h-6zM76.0 347.5h1v6h-1zM513.5 85.4h6v1h-6zM96.0 347.5h1v6h-1zM511.5 98.0h10v1h-10zM116.0 345.5h1v10h-1zM513.5 110.6h6v1h-6zM136.0 347.5h1v6h-1zM513.5 123.2h6v1h-6zM156.0 347.5h1v6h-1zM513.5 135.8h6v1h-6zM176.0 347.5h1v6h-1zM513.5 148.4h6v1h-6zM196.0 347.5h1v6h-1zM511.5 161.0h10v1h-10zM216.0 345.5h1v10h-1zM513.5 173.6h6v1h-6zM236.0 347.5h1v6h-1zM513.5 186.2h6v1h-6zM256.0 347.5h1v6h-1zM513.5 198.8h6v1h-6zM276.0 347.5h1v6h-1zM513.5 211.4h6v1h-6zM296.0 347.5h1v6h-1zM511.5 224.0h10v1h-10zM316.0 345.5h1v10h-1zM513.5 236.6h6v1h-6zM336.0 347.5h1v6h-1zM513.5 249.2h6v1h-6zM356.0 347.5h1v6h-1zM513.5 261.8h6v1h-6zM376.0 347.5h1v6h-1zM513.5 274.4h6v1h-6zM396.0 347.5h1v6h-1zM511.5 287.0h10v1h-10zM416.0 345.5h1v10h-1zM513.5 299.6h6v1h-6zM436.0 347.5h1v6h-1zM513.5 312.2h6v1h-6zM456.0 347.5h1v6h-1zM513.5 324.8h6v1h-6zM476.0 347.5h1v6h-1zM513.5 337.4h6v1h-6zM496.0 347.5h1v6h-1zM511.5 350.0h10v1h-10zM516.0 345.5h1v10h-1zM513.5 362.6h6v1h-6zM536.0 347.5h1v6h-1zM513.5 375.2h6v1h-6zM556.0 347.5h1v6h-1zM513.5 387.8h6v1h-6zM576.0 347.5h1v6h-1zM513.5 400.4h6v1h-6zM596.0 347.5h1v6h-1zM511.5 413.0h10v1h-10zM616.0 345.5h1v10h-1zM513.5 425.6h6v1h-6zM636.0 347.5h1v6h-1zM513.5 438.2h6v1h-6zM656.0 347.5h1v6h-1zM513.5 450.8h6v1h-6zM676.0 347.5h1v6h-1zM513.5 463.4h6v1h-6zM696.0 347.5h1v6h-1zM511.5 476.0h10v1h-10zM716.0 345.5h1v10h-1zM513.5 488.6h6v1h-6zM736.0 347.5h1v6h-1zM513.5 501.2h6v1h-6zM756.0 347.5h1v6h-1zM513.5 513.8h6v1h-6zM776.0 347.5h1v6h-1zM513.5 526.4h6v1h-6zM796.0 347.5h1v6h-1zM511.5 539.0h10v1h-10zM816.0 345.5h1v10h-1zM513.5 551.6h6v1h-6zM836.0 347.5h1v6h-1zM513.5 564.2h6v1h-6zM856.0 347.5h1v6h-1zM513.5 576.8h6v1h-6zM876.0 347.5h1v6h-1zM513.5 589.4h6v1h-6zM896.0 347.5h1v6h-1zM511.5 602.0h10v1h-10zM916.0 345.5h1v10h-1zM513.5 614.6h6v1h-6zM936.0 347.5h1v6h-1zM513.5 627.2h6v1h-6zM956.0 347.5h1v6h-1zM513.5 639.8h6v1h-6zM976.0 347.5h1v6h-1zM513.5 652.4h6v1h-6zM996.0 347.5h1v6h-1z" fill="#c6c2a4"/><rect x="195.5" y="135.5" width="77" height="150" fill="none" stroke="#e4e400" stroke-width="1"/><rect x="17" y="342" width="999" height="14" fill="url(#gbase)"/><path d="M22 356h1v4h-1zM23 356h1v2h-1zM24 356h1v3h-1zM25 338h1v4h-1zM27 341h1v1h-1zM29 356h1v2h-1zM30 356h1v2h-1zM34 339h1v3h-1zM36 356h1v2h-1zM38 356h1v1h-1zM51 356h1v2h-1zM55 340h1v2h-1zM58 340h1v2h-1zM61 340h1v2h-1zM64 356h1v3h-1zM68 338h1v4h-1zM69 356h1v3h-1zM80 340h1v2h-1zM83 340h1v2h-1zM83 356h1v3h-1zM85 339h1v3h-1zM95 356h1v3h-1zM97 356h1v2h-1zM100 356h1v3h-1zM106 356h1v1h-1zM108 340h1v2h-1zM112 340h1v2h-1zM118 340h1v2h-1zM133 356h1v3h-1zM136 356h1v1h-1zM139 356h1v1h-1zM145 356h1v2h-1zM146 339h1v3h-1zM152 341h1v1h-1zM164 356h1v1h-1zM166 340h1v2h-1zM172 339h1v3h-1zM181 356h1v2h-1zM182 356h1v4h-1zM184 356h1v4h-1zM185 340h1v2h-1zM186 356h1v1h-1zM194 356h1v2h-1zM204 356h1v3h-1zM206 356h1v2h-1zM212 340h1v2h-1zM220 338h1v4h-1zM221 356h1v1h-1zM225 356h1v2h-1zM233 340h1v2h-1zM239 356h1v2h-1zM242 356h1v1h-1zM246 340h1v2h-1zM249 356h1v2h-1zM250 356h1v3h-1zM258 356h1v1h-1zM264 338h1v4h-1zM264 356h1v2h-1zM266 339h1v3h-1zM268 356h1v1h-1zM270 356h1v2h-1zM781 338h1v4h-1zM784 338h1v4h-1zM790 339h1v3h-1zM793 356h1v2h-1zM795 338h1v4h-1zM796 341h1v1h-1zM797 340h1v2h-1zM797 356h1v4h-1zM823 356h1v2h-1zM827 356h1v3h-1zM845 338h1v4h-1zM846 340h1v2h-1zM847 356h1v3h-1zM848 339h1v3h-1zM851 356h1v4h-1zM852 356h1v2h-1zM854 340h1v2h-1zM859 356h1v3h-1zM860 341h1v1h-1zM883 356h1v1h-1zM888 340h1v2h-1zM889 340h1v2h-1zM891 341h1v1h-1zM892 356h1v1h-1zM894 341h1v1h-1zM903 356h1v3h-1zM905 356h1v4h-1zM907 339h1v3h-1zM908 341h1v1h-1zM908 356h1v3h-1zM911 356h1v2h-1zM912 356h1v1h-1zM914 356h1v1h-1zM921 340h1v2h-1zM926 356h1v2h-1zM927 356h1v4h-1zM928 356h1v4h-1zM932 341h1v1h-1zM934 338h1v4h-1zM938 338h1v4h-1zM946 339h1v3h-1zM950 341h1v1h-1zM956 341h1v1h-1zM957 340h1v2h-1zM975 338h1v4h-1zM978 339h1v3h-1zM981 356h1v1h-1zM985 356h1v1h-1zM995 356h1v2h-1zM997 341h1v1h-1zM1004 340h1v2h-1zM1005 338h1v4h-1zM1013 340h1v2h-1z" fill="#9a9200"/><path d="M17 342h1v1h-1zM21 355h1v1h-1zM31 355h1v1h-1zM32 342h1v1h-1zM38 342h1v2h-1zM40 355h1v1h-1zM41 355h1v1h-1zM46 342h1v2h-1zM48 355h1v1h-1zM51 342h1v1h-1zM52 342h1v2h-1zM52 355h1v1h-1zM60 355h1v1h-1zM64 342h1v2h-1zM65 355h1v1h-1zM74 355h1v1h-1zM75 342h1v1h-1zM79 355h1v1h-1zM87 342h1v1h-1zM96 342h1v1h-1zM106 342h1v2h-1zM107 342h1v1h-1zM110 342h1v1h-1zM113 354h1v2h-1zM115 342h1v1h-1zM117 355h1v1h-1zM123 354h1v2h-1zM124 355h1v1h-1zM127 355h1v1h-1zM129 342h1v1h-1zM134 342h1v1h-1zM135 342h1v2h-1zM136 342h1v2h-1zM137 355h1v1h-1zM138 354h1v2h-1zM140 342h1v1h-1zM140 355h1v1h-1zM141 354h1v2h-1zM144 342h1v2h-1zM148 354h1v2h-1zM149 342h1v2h-1zM150 354h1v2h-1zM154 342h1v1h-1zM161 342h1v1h-1zM166 354h1v2h-1zM167 342h1v1h-1zM173 355h1v1h-1zM174 342h1v2h-1zM176 342h1v1h-1zM176 354h1v2h-1zM177 354h1v2h-1zM184 342h1v2h-1zM187 355h1v1h-1zM193 342h1v1h-1zM197 342h1v1h-1zM201 342h1v1h-1zM202 355h1v1h-1zM208 355h1v1h-1zM230 342h1v1h-1zM236 342h1v1h-1zM238 354h1v2h-1zM242 342h1v1h-1zM245 355h1v1h-1zM248 342h1v1h-1zM256 355h1v1h-1zM260 355h1v1h-1zM267 342h1v2h-1zM267 355h1v1h-1zM271 342h1v2h-1zM790 355h1v1h-1zM807 355h1v1h-1zM812 342h1v1h-1zM814 342h1v1h-1zM817 342h1v1h-1zM817 355h1v1h-1zM818 342h1v1h-1zM821 354h1v2h-1zM826 355h1v1h-1zM833 355h1v1h-1zM834 354h1v2h-1zM836 342h1v1h-1zM836 355h1v1h-1zM840 342h1v2h-1zM840 355h1v1h-1zM841 354h1v2h-1zM842 355h1v1h-1zM844 355h1v1h-1zM847 342h1v1h-1zM851 342h1v2h-1zM858 354h1v2h-1zM861 355h1v1h-1zM862 342h1v1h-1zM873 355h1v1h-1zM876 355h1v1h-1zM882 342h1v1h-1zM883 342h1v1h-1zM884 342h1v2h-1zM884 355h1v1h-1zM886 355h1v1h-1zM891 354h1v2h-1zM901 342h1v1h-1zM904 354h1v2h-1zM907 355h1v1h-1zM911 342h1v2h-1zM916 355h1v1h-1zM918 342h1v1h-1zM919 342h1v1h-1zM919 354h1v2h-1zM932 355h1v1h-1zM933 342h1v1h-1zM942 355h1v1h-1zM950 355h1v1h-1zM961 342h1v2h-1zM961 354h1v2h-1zM962 342h1v2h-1zM962 354h1v2h-1zM966 354h1v2h-1zM968 354h1v2h-1zM969 342h1v1h-1zM972 342h1v1h-1zM974 355h1v1h-1zM987 342h1v1h-1zM987 355h1v1h-1zM988 355h1v1h-1zM990 355h1v1h-1zM991 355h1v1h-1zM996 342h1v1h-1zM997 355h1v1h-1zM1002 355h1v1h-1zM1004 354h1v2h-1zM1010 354h1v2h-1zM1012 355h1v1h-1zM1014 342h1v1h-1zM1015 342h1v1h-1zM1015 354h1v2h-1z" fill="#000"/><path d="M276 186H276V186H277V185H278V186H279V188H280V186H281V184H282V184H283V188H284V184H285V186H286V186H287V186H288V186H289V189H290V188H291V189H292V186H293V186H294V186H295V186H296V189H297V188H298V188H299V184H300V186H301V186H302V186H303V186H304V186H305V186H306V186H307V186H308V186H309V184H310V189H311V186H312V186H313V186H314V183H315V186H316V188H317V186H318V186H319V185H320V183H321V186H322V186H323V186H324V186H325V186H326V186H327V188H328V189H329V186H330V186H331V185H332V188H333V186H334V189H335V188H336V188H337V188H338V186H339V189H340V186H341V186H342V186H343V184H344V186H345V188H346V186H347V186H348V188H349V189H350V188H351V189H352V184H353V188H354V186H355V186H356V183H357V189H358V186H359V189H360V189H361V186H362V186H363V188H364V186H365V186H366V186H367V188H368V183H369V186H370V186H371V186H372V186H373V188H374V188H375V186H376V184H377V186H378V188H379V186H380V188H381V186H382V186H383V186H384V186H385V189H386V186H387V186H388V186H389V186H390V186H391V186H392V186H393V186H394V186H395V189H396V186H397V188H398V186H399V189H400V186H401V186H402V186H403V186H404V186H405V188H406V188H407V189H408V186H409V186H410V184H411V186H412V186H413V186H414V186H415V186H416V186H417V186H418V186H419V186H420V188H421V186H422V184H423V188H424V186H425V186H426V188H427V186H428V186H429V186H430V186H431V186H432V186H433V188H434V186H435V186H436V186H437V189H438V186H439V188H440V186H441V186H442V188H443V186H444V186H445V186H446V186H447V186H448V186H449V186H450V189H451V186H452V186H453V186H454V186H455V186H456V186H457V186H458V186H459V186H460V186H461V186H462V186H463V186H464V188H465V188H466V186H467V186H468V188H469V183H470V189H471V186H472V188H473V186H474V186H475V186H476V186H477V186H478V186H479V188H480V188H481V186H482V186H483V186H484V188H485V184H486V189H487V186H488V186H489V184H490V186H491V186H492V184H493V186H494V186H495V185H496V186H497V186H498V186H499V183H500V186H501V189H502V186H503V189H504V188H505V186H506V186H507V186H508V186H509V188H510V186H511V186H512V186H513V188H514V186H515V184H516V186H517V189H518V186H519V189H520V186H521V188H522V186H523V188H524V189H525V186H526V188H527V186H528V186H529V188H530V186H531V186H532V186H533V186H534V186H535V186H536V188H537V186H538V186H539V186H540V186H541V184H542V186H543V186H544V189H545V188H546V186H547V189H548V186H549V183H550V183H551V186H552V188H553V185H554V186H555V186H556V186H557V186H558V186H559V186H560V186H561V185H562V184H563V186H564V186H565V185H566V186H567V184H568V186H569V186H570V188H571V188H572V188H573V186H574V186H575V186H576V188H577V186H578V186H579V186H580V186H581V188H582V186H583V186H584V188H585V186H586V186H587V186H588V186H589V186H590V186H591V186H592V186H593V186H594V186H595V186H596V186H597V186H598V186H599V186H600V186H601V188H602V186H603V188H604V188H605V186H606V186H607V186H608V186H609V186H610V186H611V186H612V186H613V186H614V186H615V186H616V186H617V186H618V186H619V186H620V184H621V186H622V189H623V186H624V186H625V186H626V186H627V189H628V188H629V186H630V186H631V186H632V188H633V186H634V186H635V184H636V186H637V186H638V186H639V188H640V186H641V186H642V186H643V185H644V186H645V186H646V186H647V188H648V186H649V188H650V187H651V187H652V189H653V187H654V187H655V188H656V188H657V188H658V187H659V187H660V183H661V187H662V187H663V189H664V184H665V187H666V188H667V187H668V189H669V183H670V187H671V187H672V188H673V187H674V187H675V187H676V187H677V187H678V189H679V187H680V187H681V187H682V189H683V187H684V187H685V188H686V187H687V187H688V187H689V187H690V187H691V188H692V187H693V187H694V187H695V187H696V184H697V187H698V185H699V188H700V189H701V189H702V189H703V188H704V189H705V188H706V188H707V187H708V187H709V187H710V189H711V187H712V187H713V187H714V187H715V187H716V189H717V188H718V188H719V187H720V187H721V187H722V183H723V187H724V187H725V187H726V187H727V187H728V187H729V188H730V188H731V187H732V187H733V187H734V188H735V184H736V187H737V184H738V187H739V187H740V187H741V188H742V189H743V187H744V187H745V184H746V188H747V189H748V187H749V188H750V187H751V187H752V187H753V184H754V187H755V187H756V187H757V188H758V187H759V188H760V188H761V188H762V188H763V189H764V187H765V187H766V184H767V187H768V187H769V188H770V187H771V187H772V187H773V187H774V188H775V187H776V187H777V187H778V189H779V512H778V510H777V510H776V512H775V516H774V515H773V516H772V509H771V512H770V512H769V512H768V512H767V512H766V510H765V512H764V512H763V512H762V512H761V512H760V512H759V512H758V510H757V512H756V512H755V512H754V512H753V512H752V512H751V514H750V512H749V512H748V512H747V512H746V512H745V509H744V510H743V509H742V512H741V509H740V512H739V512H738V510H737V509H736V512H735V510H734V509H733V509H732V516H731V516H730V512H729V512H728V510H727V515H726V509H725V512H724V510H723V512H722V512H721V510H720V512H719V512H718V512H717V510H716V509H715V510H714V512H713V509H712V509H711V512H710V512H709V509H708V512H707V510H706V512H705V512H704V516H703V509H702V512H701V512H700V512H699V510H698V512H697V512H696V509H695V514H694V512H693V512H692V509H691V514H690V515H689V512H688V512H687V510H686V510H685V512H684V512H683V512H682V512H681V510H680V509H679V512H678V512H677V512H676V512H675V512H674V516H673V512H672V510H671V510H670V512H669V512H668V512H667V515H666V516H665V512H664V510H663V515H662V512H661V512H660V512H659V512H658V512H657V509H656V510H655V512H654V512H653V512H652V515H651V510H650V512H649V512H648V512H647V509H646V510H645V512H644V512H643V512H642V512H641V512H640V512H639V512H638V510H637V512H636V514H635V516H634V512H633V515H632V512H631V512H630V512H629V515H628V512H627V509H626V512H625V512H624V512H623V510H622V512H621V512H620V512H619V509H618V512H617V509H616V509H615V512H614V510H613V512H612V512H611V512H610V512H609V510H608V512H607V510H606V510H605V515H604V515H603V512H602V512H601V516H600V512H599V512H598V512H597V509H596V512H595V512H594V512H593V512H592V512H591V510H590V510H589V512H588V510H587V512H586V512H585V512H584V512H583V512H582V512H581V512H580V512H579V510H578V512H577V512H576V512H575V512H574V512H573V512H572V512H571V510H570V510H569V512H568V510H567V512H566V512H565V516H564V512H563V512H562V512H561V512H560V514H559V510H558V512H557V512H556V512H555V510H554V512H553V514H552V512H551V512H550V510H549V510H548V512H547V512H546V512H545V512H544V512H543V512H542V512H541V512H540V512H539V512H538V512H537V512H536V512H535V512H534V512H533V512H532V512H531V510H530V512H529V512H528V512H527V510H526V512H525V512H524V515H523V512H522V509H521V512H520V512H519V512H518V512H517V512H516V510H515V510H514V509H513V512H512V512H511V510H510V512H509V516H508V512H507V510H506V512H505V512H504V512H503V512H502V512H501V512H500V509H499V509H498V515H497V512H496V510H495V512H494V515H493V512H492V512H491V509H490V512H489V509H488V510H487V512H486V512H485V512H484V510H483V510H482V510H481V512H480V512H479V512H478V510H477V512H476V512H475V510H474V509H473V509H472V512H471V509H470V512H469V512H468V512H467V510H466V515H465V512H464V512H463V512H462V510H461V510H460V512H459V512H458V512H457V512H456V512H455V515H454V512H453V512H452V512H451V512H450V512H449V509H448V510H447V512H446V510H445V512H444V512H443V510H442V512H441V512H440V512H439V512H438V512H437V512H436V512H435V512H434V512H433V512H432V509H431V512H430V512H429V510H428V510H427V512H426V512H425V510H424V512H423V510H422V516H421V512H420V512H419V512H418V512H417V510H416V512H415V512H414V510H413V512H412V515H411V512H410V512H409V515H408V512H407V510H406V512H405V510H404V512H403V515H402V512H401V512H400V509H399V512H398V509H397V512H396V515H395V512H394V510H393V512H392V510H391V509H390V512H389V512H388V512H387V512H386V516H385V510H384V512H383V512H382V510H381V512H380V512H379V510H378V512H377V512H376V512H375V512H374V515H373V512H372V514H371V512H370V510H369V509H368V510H367V512H366V512H365V512H364V512H363V512H362V512H361V509H360V512H359V510H358V512H357V512H356V512H355V512H354V509H353V512H352V516H351V509H350V512H349V512H348V512H347V510H346V509H345V512H344V512H343V515H342V512H341V510H340V515H339V512H338V512H337V512H336V512H335V510H334V510H333V515H332V516H331V510H330V510H329V510H328V515H327V509H326V512H325V510H324V510H323V509H322V512H321V512H320V510H319V512H318V510H317V512H316V512H315V515H314V509H313V512H312V516H311V515H310V512H309V510H308V512H307V510H306V512H305V512H304V512H303V512H302V510H301V510H300V512H299V512H298V512H297V510H296V512H295V512H294V512H293V512H292V510H291V512H290V510H289V512H288V512H287V512H286V512H285V509H284V510H283V512H282V512H281V512H280V510H279V510H278V509H277V510H276Z" fill="url(#gblk)"/><path d="M526 512 L527.2 493 L528.8 512 Z" fill="#000"/><path d="M17 350.0h999v1h-999zM516.0 186h1v326h-1zM36.0 347.5h1v6h-1zM56.0 347.5h1v6h-1zM76.0 347.5h1v6h-1zM96.0 347.5h1v6h-1zM116.0 345.5h1v10h-1zM136.0 347.5h1v6h-1zM156.0 347.5h1v6h-1zM176.0 347.5h1v6h-1zM196.0 347.5h1v6h-1zM216.0 345.5h1v10h-1zM236.0 347.5h1v6h-1zM256.0 347.5h1v6h-1zM276.0 347.5h1v6h-1zM296.0 347.5h1v6h-1zM316.0 345.5h1v10h-1zM336.0 347.5h1v6h-1zM356.0 347.5h1v6h-1zM376.0 347.5h1v6h-1zM396.0 347.5h1v6h-1zM416.0 345.5h1v10h-1zM436.0 347.5h1v6h-1zM456.0 347.5h1v6h-1zM476.0 347.5h1v6h-1zM496.0 347.5h1v6h-1zM516.0 345.5h1v10h-1zM536.0 347.5h1v6h-1zM556.0 347.5h1v6h-1zM576.0 347.5h1v6h-1zM596.0 347.5h1v6h-1zM616.0 345.5h1v10h-1zM636.0 347.5h1v6h-1zM656.0 347.5h1v6h-1zM676.0 347.5h1v6h-1zM696.0 347.5h1v6h-1zM716.0 345.5h1v10h-1zM736.0 347.5h1v6h-1zM756.0 347.5h1v6h-1zM776.0 347.5h1v6h-1zM796.0 347.5h1v6h-1zM816.0 345.5h1v10h-1zM836.0 347.5h1v6h-1zM856.0 347.5h1v6h-1zM876.0 347.5h1v6h-1zM896.0 347.5h1v6h-1zM916.0 345.5h1v10h-1zM936.0 347.5h1v6h-1zM956.0 347.5h1v6h-1zM976.0 347.5h1v6h-1zM996.0 347.5h1v6h-1zM513.5 186.2h6v1h-6zM513.5 198.8h6v1h-6zM513.5 211.4h6v1h-6zM511.5 224.0h10v1h-10zM513.5 236.6h6v1h-6zM513.5 249.2h6v1h-6zM513.5 261.8h6v1h-6zM513.5 274.4h6v1h-6zM511.5 287.0h10v1h-10zM513.5 299.6h6v1h-6zM513.5 312.2h6v1h-6zM513.5 324.8h6v1h-6zM513.5 337.4h6v1h-6zM511.5 350.0h10v1h-10zM513.5 362.6h6v1h-6zM513.5 375.2h6v1h-6zM513.5 387.8h6v1h-6zM513.5 400.4h6v1h-6zM511.5 413.0h10v1h-10zM513.5 425.6h6v1h-6zM513.5 438.2h6v1h-6zM513.5 450.8h6v1h-6zM513.5 463.4h6v1h-6zM511.5 476.0h10v1h-10zM513.5 488.6h6v1h-6zM513.5 501.2h6v1h-6z" fill="#9482a0"/><path d="M271.5 36 L280.5 36 L276 45.5 Z" fill="#ffb000"/><circle cx="10.5" cy="350.6" r="8.6" fill="#ffff00" stroke="#f09010" stroke-width="2"/><path d="M11 346.2 V355.2 M8.4 348.6 L11.2 346.4" stroke="#1c1c00" stroke-width="1.8" fill="none"/><path d="M995.5 300.5 L1004 295.5 L1004 305.5 Z" fill="#ffff00"/><rect x="1003" y="299.6" width="16" height="1.5" fill="#f4f400"/><path d="M223.5 190.5 L230.5 196.5 M230.5 190.5 L223.5 196.5" stroke="#ffffff" stroke-width="2.2" stroke-linecap="round"/><rect x="16" y="671" width="1001" height="97" fill="#000"/><rect x="21.5" y="674.5" width="280" height="23" rx="4.5" fill="none" stroke="#d4d4d4" stroke-width="1.2"/><rect x="591.5" y="674.5" width="185" height="25" rx="4.5" fill="none" stroke="#d4d4d4" stroke-width="1.2"/><rect x="781.5" y="674.5" width="231" height="92" rx="5" fill="none" stroke="#d4d4d4" stroke-width="1.2"/><rect x="29.5" y="681.5" width="32" height="13.5" rx="6.7" fill="#9c9cb0"/><rect x="30.5" y="682.8" width="30.5" height="12" rx="6" fill="url(#gpill)"/><rect x="614.5" y="681.2" width="32" height="13.5" rx="6.7" fill="#9c9cb0"/><rect x="615.5" y="682.5" width="30.5" height="12" rx="6" fill="url(#gpill)"/><rect x="597.5" y="681.2" width="15" height="14.3" fill="#dadae2" stroke="#ff9a00" stroke-width="1.3"/><path d="M650.5 693 H655.5 L661 682.8 H665" fill="none" stroke="#ffffff" stroke-width="2"/><rect x="741.5" y="680.5" width="31" height="12" fill="none" stroke="#00d4d4" stroke-width="1.2" stroke-dasharray="3 2"/></svg>
<div class="t" style="left:7.2px;top:11.3px;font-size:11.5px;line-height:11.5px;font-weight:normal;color:#f4f4f0;letter-spacing:0.6px">File</div>
<div class="t" style="left:41.3px;top:11.3px;font-size:11.5px;line-height:11.5px;font-weight:normal;color:#f4f4f0;letter-spacing:0.17px">Edit</div>
<div class="t" style="left:76.9px;top:11.3px;font-size:11.5px;line-height:11.5px;font-weight:normal;color:#f4f4f0;letter-spacing:0.04px">Vertical</div>
<div class="t" style="left:129.0px;top:11.3px;font-size:11.5px;line-height:11.5px;font-weight:normal;color:#f4f4f0;letter-spacing:0.15px">Digital</div>
<div class="t" style="left:176.7px;top:11.3px;font-size:11.5px;line-height:11.5px;font-weight:normal;color:#f4f4f0;letter-spacing:0.25px">Horiz/Acq</div>
<div class="t" style="left:240.7px;top:11.3px;font-size:11.5px;line-height:11.5px;font-weight:normal;color:#f4f4f0;letter-spacing:0.3px">Trig</div>
<div class="t" style="left:274.3px;top:11.3px;font-size:11.5px;line-height:11.5px;font-weight:normal;color:#f4f4f0;letter-spacing:0.28px">Display</div>
<div class="t" style="left:326.9px;top:11.3px;font-size:11.5px;line-height:11.5px;font-weight:normal;color:#f4f4f0;letter-spacing:0.08px">Cursors</div>
<div class="t" style="left:382.6px;top:11.3px;font-size:11.5px;line-height:11.5px;font-weight:normal;color:#f4f4f0;letter-spacing:-0.1px">Measure</div>
<div class="t" style="left:441.1px;top:11.3px;font-size:11.5px;line-height:11.5px;font-weight:normal;color:#f4f4f0;letter-spacing:0.37px">Mask</div>
<div class="t" style="left:483.6px;top:11.3px;font-size:11.5px;line-height:11.5px;font-weight:normal;color:#f4f4f0;letter-spacing:-0.1px">Math</div>
<div class="t" style="left:523.1px;top:11.3px;font-size:11.5px;line-height:11.5px;font-weight:normal;color:#f4f4f0;letter-spacing:0.3px">MyScope</div>
<div class="t" style="left:586.0px;top:11.3px;font-size:11.5px;line-height:11.5px;font-weight:normal;color:#f4f4f0;letter-spacing:0.13px">Analyze</div>
<div class="t" style="left:639.1px;top:11.3px;font-size:11.5px;line-height:11.5px;font-weight:normal;color:#f4f4f0;letter-spacing:0.34px">Utilities</div>
<div class="t" style="left:691.3px;top:11.3px;font-size:11.5px;line-height:11.5px;font-weight:normal;color:#f4f4f0;letter-spacing:0.17px">Help</div>
<div class="t" style="left:802.0px;top:10.8px;font-size:12px;line-height:12px;font-weight:normal;color:#1a1f7a;">MSO70604C</div>
<div class="t" style="left:892.0px;top:8.4px;font-size:17px;line-height:17px;font-weight:bold;color:#a09070;">Tek</div>
<div class="t" style="left:890.5px;top:6.9px;font-size:17px;line-height:17px;font-weight:bold;color:#ffffff;">Tek</div>
<div class="t" style="left:988.0px;top:9.8px;font-size:15px;line-height:15px;font-weight:normal;color:#ffffff;">X</div>
<div class="t" style="left:25.6px;top:52.0px;font-size:14px;line-height:14px;font-weight:normal;color:#f0f0f0;">(c1 out a1)</div>
<div class="t" style="left:239.9px;top:183.9px;font-size:12px;line-height:12px;font-weight:normal;color:#e8e8dc;">C1</div>
<div class="t" style="left:225.9px;top:225.6px;font-size:12px;line-height:12px;font-weight:normal;color:#e8e8dc;">A1</div>
<div class="t" style="left:38.4px;top:683.5px;font-size:10px;line-height:10px;font-weight:bold;color:#101000;">C1</div>
<div class="t" style="left:623.4px;top:683.5px;font-size:10px;line-height:10px;font-weight:bold;color:#101000;">C1</div>
<div class="t" style="left:66.5px;top:681.8px;font-size:12px;line-height:12px;font-weight:bold;color:#f2f2f2;letter-spacing:0.3px">60.0mV/div</div>
<div class="t" style="left:182.1px;top:681.8px;font-size:12px;line-height:12px;font-weight:bold;color:#f2f2f2;letter-spacing:0.3px">50&Omega;</div>
<div class="t" style="left:214.3px;top:680.5px;font-size:10px;line-height:10px;font-weight:bold;color:#f2f2f2;">B</div>
<div class="t" style="left:220.3px;top:679.0px;font-size:10px;line-height:10px;font-weight:bold;color:#f2f2f2;">&#8217;</div>
<div class="t" style="left:220.8px;top:686.0px;font-size:10px;line-height:10px;font-weight:bold;color:#f2f2f2;">W</div>
<div class="t" style="left:229.4px;top:681.8px;font-size:12px;line-height:12px;font-weight:bold;color:#f2f2f2;letter-spacing:0.3px">:8.0G</div>
<div class="t" style="left:598.9px;top:682.2px;font-size:11px;line-height:11px;font-weight:bold;color:#111111;">A'</div>
<div class="t" style="left:666.9px;top:681.8px;font-size:12px;line-height:12px;font-weight:bold;color:#f2f2f2;letter-spacing:0.3px">48.0mV</div>
<div class="t" style="left:742.7px;top:682.0px;font-size:10px;line-height:10px;font-weight:bold;color:#00d8d8;">Visual</div>
<div class="t" style="left:788.9px;top:680.6px;font-size:12px;line-height:12px;font-weight:bold;color:#f2f2f2;letter-spacing:0.3px">4.0&micro;s/div</div>
<div class="t" style="left:853.9px;top:680.6px;font-size:12px;line-height:12px;font-weight:bold;color:#f2f2f2;letter-spacing:0.3px">25.0GS/s</div>
<div class="t" style="left:938.7px;top:680.6px;font-size:12px;line-height:12px;font-weight:bold;color:#f2f2f2;letter-spacing:0.3px">40.0ps/pt</div>
<div class="t" style="left:788.7px;top:702.8px;font-size:12px;line-height:12px;font-weight:bold;color:#18ee18;letter-spacing:0.3px">Run</div>
<div class="t" style="left:874.2px;top:702.8px;font-size:12px;line-height:12px;font-weight:bold;color:#f2f2f2;letter-spacing:0.3px">Sample</div>
<div class="t" style="left:788.5px;top:723.8px;font-size:12px;line-height:12px;font-weight:bold;color:#f2f2f2;letter-spacing:0.3px">2 258 acqs</div>
<div class="t" style="left:928.5px;top:723.8px;font-size:12px;line-height:12px;font-weight:bold;color:#f2f2f2;letter-spacing:0.3px">RL:1.0M</div>
<div class="t" style="left:789.0px;top:744.8px;font-size:12px;line-height:12px;font-weight:bold;color:#f2f2f2;letter-spacing:0.3px">Auto</div>
<div class="t" style="left:831.1px;top:744.8px;font-size:12px;line-height:12px;font-weight:bold;color:#f2f2f2;letter-spacing:0.3px">June 10, 2016</div>
<div class="t" style="left:955.7px;top:744.8px;font-size:12px;line-height:12px;font-weight:bold;color:#f0a020;letter-spacing:0.3px">04:23:13</div>
</body></html>
